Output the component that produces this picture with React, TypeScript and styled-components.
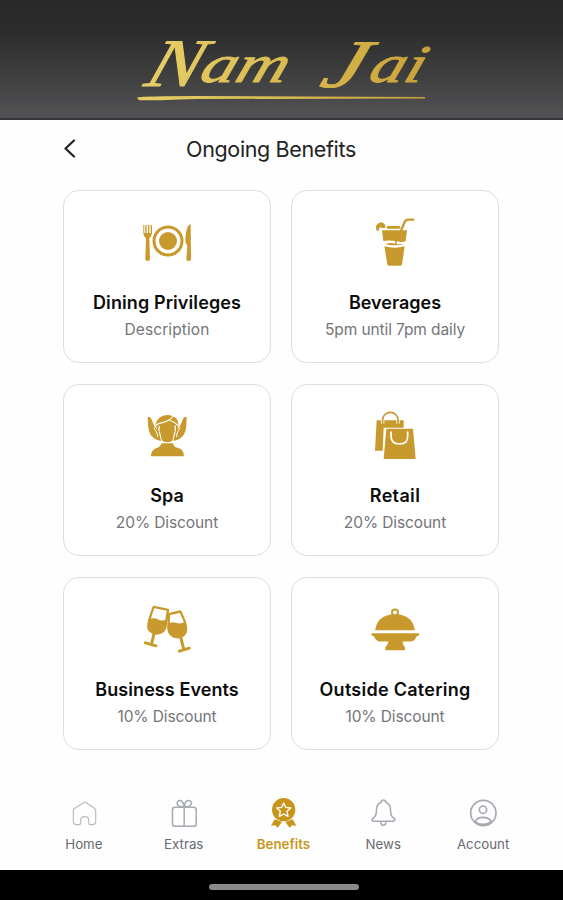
import React from 'react';
import styled, { createGlobalStyle } from 'styled-components';

const GOLD = '#c89a2e';

const GlobalStyle = createGlobalStyle`
  * { box-sizing: border-box; }
  body { margin: 0; background: #fff; font-family: Inter, "Liberation Sans", sans-serif; }
`;

const Screen = styled.div`
  display: flex;
  flex-direction: column;
  width: 563px;
  height: 900px;
  overflow: hidden;
  background: #fefefe;
`;

const Banner = styled.header`
  height: 120px;
  flex: none;
  background: linear-gradient(#282828 0%, #2c2c2c 25%, #3d3d3e 60%, #515153 97%);
  border-bottom: 2px solid #38383a;
`;

const Wordmark = styled.svg`
  display: block;
  width: 563px;
  height: 118px;
`;

const TitleBar = styled.div`
  display: grid;
  grid-template-columns: 36px 1fr 36px;
  align-items: center;
  height: 58px;
  flex: none;
  padding: 0 73px 0 52px;
`;

const BackButton = styled.button`
  display: flex;
  align-items: center;
  justify-content: center;
  width: 36px;
  height: 36px;
  padding: 0;
  border: 0;
  background: none;
`;

const PageTitle = styled.h1`
  margin: 0;
  color: #222;
  font-size: 21.5px;
  font-weight: 400;
  line-height: 28px;
  text-align: center;
  white-space: nowrap;
  letter-spacing: -0.36px;
`;

const BenefitGrid = styled.main`
  display: grid;
  grid-template-columns: 208px 208px;
  grid-auto-rows: 172.5px;
  gap: 21.2px 20px;
  padding: 12px 0 0 63px;
  flex: 1;
`;

const Card = styled.section`
  display: flex;
  flex-direction: column;
  align-items: center;
  padding-top: 19px;
  border: 1px solid #dedee0;
  border-radius: 16px;
  background: #fff;
`;

const CardIcon = styled.svg`
  width: 60px;
  height: 60px;
  flex: none;
`;

const CardTitle = styled.h2<{ $tracking: number }>`
  margin: 19.500px 0 0;
  color: #0c0c0c;
  font-size: 18px;
  font-weight: 600;
  line-height: 26px;
  white-space: nowrap;
  letter-spacing: ${(p) => p.$tracking}px;
`;

const CardNote = styled.p<{ $tracking: number }>`
  margin: 2px 0 0;
  color: #747479;
  font-size: 15.5px;
  line-height: 24px;
  white-space: nowrap;
  letter-spacing: ${(p) => p.$tracking}px;
`;

const TabBar = styled.nav`
  display: grid;
  grid-template-columns: repeat(5, 99.8px);
  height: 72px;
  flex: none;
  padding-left: 34px;
`;

const Tab = styled.a<{ $active?: boolean }>`
  display: flex;
  flex-direction: column;
  align-items: center;
  color: ${(p) => (p.$active ? '#c8951c' : '#696a6f')};
  font-size: 13.3px;
  font-weight: ${(p) => (p.$active ? 600 : 400)};
  line-height: 20px;
`;

const TabIcon = styled.svg`
  width: 30px;
  height: 30px;
  margin-bottom: 6px;
`;

const SystemBar = styled.footer`
  display: flex;
  justify-content: center;
  height: 30px;
  flex: none;
  padding: 14px 0 0 5px;
  background: #000;
`;

const HomeHandle = styled.div`
  width: 150px;
  height: 6px;
  border-radius: 3px;
  background: #89898b;
`;

const line = {
  fill: 'none',
  stroke: '#a6a9b1',
  strokeWidth: 4.5,
  strokeLinecap: 'round' as const,
  strokeLinejoin: 'round' as const,
};

const PlateArt = (
  <>
    <circle cx="324" cy="168" r="42" fill="none" stroke={GOLD} strokeWidth="9" />
    <circle cx="324" cy="168" r="27" fill={GOLD} />
    <path d="M250 120v24q1 12 8 16l-2 62q0 6 7 6t7-6l-2-62q7-4 8-16v-24h-4v24h-4v-24h-4v24h-4v-24h-4v24h-3v-24Z" fill={GOLD} />
    <path d="M392 116q-15 8-16 48 0 13 6 18l-3 40q0 6 7 6t7-6Z" fill={GOLD} />
  </>
);

const DrinkArt = (
  <>
    <path d="M276 136q-6-11 3-19 10-8 18 0 3 4 3 10l-9 1q-4-6-9 0-1 5-3 9Z" fill={GOLD} stroke={GOLD} strokeWidth="3" strokeLinejoin="round" />
    <path d="M309 127h33" stroke={GOLD} strokeWidth="8" strokeLinecap="round" />
    <path d="M348 137l11-26q3-7 10-7h16" fill="none" stroke={GOLD} strokeWidth="7" strokeLinecap="round" />
    <path d="M291 136h75l-4 33q-14 4-26 0-22-4-41-1Z" fill={GOLD} />
    <path d="M302 177q14-5 29-1 14 3 27 0-6 5-28 5t-28-4Z" fill={GOLD} />
    <path d="M334 167l-3 12" stroke={GOLD} strokeWidth="5" />
    <path d="M298 184q31 8 61 0l-8 54q-1 4-5 4h-34q-4 0-5-4Z" fill={GOLD} />
  </>
);

const SpaArt = (
  <>
    <path d="M287 133q3-20 23-26 18-5 33 3 12 7 12 24l-5 27q-6 24-28 26-22-1-28-25Z" fill={GOLD} />
    <path d="M285 138q8-8 25-11 20-5 30-19M325 120q18 4 29 17M298 138q-4 15 3 31M345 136q4 16-3 33" fill="none" stroke="#fff" strokeWidth="3.5" />
    <path d="M263 112q6-3 10 3l11 25 15 17 5 26q-19-2-32-18-8-12-9-53Zm117 0q-6-3-10 3l-11 25-14 17-6 26q19-2 32-18 9-12 9-53Z" fill={GOLD} />
    <path d="M282 143q12 18 11 28M361 143q-13 18-11 28M298 156l7 28M345 156l-7 28" fill="none" stroke="#fff" strokeWidth="3" />
    <path d="M304 190h35l3 7q3 5 13 7 16 4 17 25H273q0-18 15-24 14-4 16-15Z" fill={GOLD} />
  </>
);

const BagsArt = (
  <>
    <path d="M275 121h81v22h-60l-3 69h-23Z" fill={GOLD} />
    <path d="M293 131v-13a23 22 0 0 1 46 0v13" fill="none" stroke="#fff" strokeWidth="10" />
    <path d="M293 131v-12a23 22 0 0 1 46 0v12" fill="none" stroke={GOLD} strokeWidth="5" strokeLinecap="round" />
    <path d="M304 146h80l8 91h-96Z" fill={GOLD} />
    <path d="M318 156v11q0 25 26 25t24-25v-11" fill="none" stroke="#fff" strokeWidth="5" strokeLinecap="round" />
  </>
);

const GlassesArt = (
  <>
    <path d="M281 97l43 9-8 53q-6 18-26 18-24-3-25-20 0-18 16-60Z" fill="none" stroke={GOLD} strokeWidth="7" strokeLinejoin="round" />
    <path d="M265 134q20-6 29 1 8 6 25 1-1 37-26 42-30-2-30-22 0-12 2-22Z" fill={GOLD} />
    <path d="M282 177l-7 31M256 205l32 9" stroke={GOLD} strokeWidth="9" strokeLinecap="round" />
    <path d="M327 119l34-8q19 37 17 56-5 22-28 21-22-3-25-26Z" fill="none" stroke={GOLD} strokeWidth="7" strokeLinejoin="round" />
    <path d="M324 148q12-8 24-3 14 5 28-4 8 18 4 32-8 18-27 18-29-4-29-43Z" fill={GOLD} />
    <path d="M362 188l9 35M358 230l30-9" stroke={GOLD} strokeWidth="9" strokeLinecap="round" />
  </>
);

const ClocheArt = (
  <>
    <circle cx="330" cy="114" r="9" fill="none" stroke={GOLD} strokeWidth="6" />
    <path d="M270 167q6-38 42-46 18-4 36 0 36 8 42 46Z" fill={GOLD} />
    <path d="M261 176h138q4 0 4 4t-4 4q-5 1-7 7-4 9-16 10h-23q1 12 5 14 3 3 2 12H301q-1-9 2-12 6-3 7-14h-25q-11-1-15-10-2-6-7-7-4 0-4-4t2-4Z" fill={GOLD} />
  </>
);

const HomeArt = (
  <path {...line} strokeWidth={3.5} stroke="#b8babf" d="M70 78q0-5 4-8l27-17q4-2 8 0l24 17q4 3 4 8v31q0 10-9 10h-7q-5 0-5-6v-8q0-10-12-10t-12 10v8q0 6-6 6h-7q-9 0-9-10Z" />
);

const GiftArt = (
  <>
    <rect {...line} x="366" y="67" width="71" height="57" rx="7" />
    <path {...line} d="M401 68v55M400 67q-22-3-20-14 5-12 16-3 5 6 4 17Zm2 0q22-3 21-14-5-12-17-3-5 6-4 17Z" />
  </>
);

const BadgeArt = (
  <>
    <circle cx="704" cy="74" r="35" fill="#c8951c" />
    <path d="M677 103l-11 19 13-1 7 7 13-17Zm54 0l11 19-13-1-7 7-13-17Z" fill="#c8951c" />
    <path d="M704 54l6 13 15 2-11 10 3 15-13-7-13 7 3-15-11-10 15-2Z" fill="none" stroke="#fff" strokeWidth="4" strokeLinejoin="round" />
  </>
);

const BellArt = (
  <>
    <path {...line} d="M158 106q-2-4 5-8 8-4 8-25 1-17 15-22 0-6 6-6t6 6q14 5 15 22 0 21 8 25 7 4 5 8-2 3-5 3h-58q-4 0-5-3Z" />
    <path {...line} d="M184 112q1 9 8 9t7-9" />
  </>
);

const AccountArt = (
  <>
    <circle {...line} cx="490" cy="84" r="38" strokeWidth={5} />
    <circle {...line} cx="489" cy="74" r="11" strokeWidth={5} />
    <path {...line} strokeWidth={5} d="M465 109q7-12 24-12t25 12q-10 9-25 9t-24-9Z" />
  </>
);

interface Benefit {
  title: string;
  titleTracking: number;
  note: string;
  noteTracking: number;
  viewBox: string;
  art: React.ReactNode;
}

const benefits: Benefit[] = [
  { title: 'Dining Privileges', titleTracking: 0.1, note: 'Description', noteTracking: 0.1, viewBox: '231 75 180 180', art: PlateArt },
  { title: 'Beverages', titleTracking: 0, note: '5pm until 7pm daily', noteTracking: -0.1, viewBox: '240 75 180 180', art: DrinkArt },
  { title: 'Spa', titleTracking: 0, note: '20% Discount', noteTracking: -0.1, viewBox: '231 72 180 180', art: SpaArt },
  { title: 'Retail', titleTracking: 0.35, note: '20% Discount', noteTracking: -0.1, viewBox: '240 72 180 180', art: BagsArt },
  { title: 'Business Events', titleTracking: 0.08, note: '10% Discount', noteTracking: -0.1, viewBox: '231 67.5 180 180', art: GlassesArt },
  { title: 'Outside Catering', titleTracking: 0.26, note: '10% Discount', noteTracking: -0.1, viewBox: '240 67.5 180 180', art: ClocheArt },
];

const tabs = [
  { label: 'Home', viewBox: '57 39 90 90', art: HomeArt },
  { label: 'Extras', viewBox: '355.5 39 90 90', art: GiftArt },
  { label: 'Benefits', viewBox: '657 39 90 90', art: BadgeArt, active: true },
  { label: 'News', viewBox: '145.5 39 90 90', art: BellArt },
  { label: 'Account', viewBox: '444 39 90 90', art: AccountArt },
];

export default function App() {
  return (
    <Screen>
      <GlobalStyle />
      <Banner>
        <Wordmark viewBox="0 0 563 118" role="img" aria-label="Nam Jai">
          <defs>
            <linearGradient id="gold" gradientUnits="userSpaceOnUse" x1="138" y1="0" x2="428" y2="0">
              <stop offset="0" stopColor="#e6ce68" />
              <stop offset="0.5" stopColor="#d9bb50" />
              <stop offset="1" stopColor="#c9a239" />
            </linearGradient>
          </defs>
          <g
            fill="url(#gold)"
            stroke="url(#gold)"
            strokeWidth="0.9"
            strokeLinejoin="round"
            fontFamily="'Liberation Serif', serif"
            fontStyle="italic"
            transform="translate(28 0) skewX(-19)"
          >
            <text x="144" y="86" fontSize="68" textLength="54" lengthAdjust="spacingAndGlyphs">N</text>
            <text x="198" y="82" fontSize="53" textLength="86" lengthAdjust="spacingAndGlyphs">am</text>
            <text x="320" y="87" fontSize="68" textLength="42" lengthAdjust="spacingAndGlyphs">J</text>
            <text x="367" y="82" fontSize="53" textLength="54" lengthAdjust="spacingAndGlyphs">ai</text>
          </g>
          <path d="M137 97.5q8-1.500 60-1.500l228 1v1.500l-228 .5q-54 2-58 1Z" fill="url(#gold)" />
        </Wordmark>
      </Banner>
      <TitleBar>
        <BackButton aria-label="Back">
          <svg width="14" height="20" viewBox="0 0 14 20" fill="none" stroke="#222" strokeWidth="2.2" strokeLinecap="round" strokeLinejoin="round">
            <path d="M11 1.500L2.500 9.500l8.500 8" />
          </svg>
        </BackButton>
        <PageTitle>Ongoing Benefits</PageTitle>
      </TitleBar>
      <BenefitGrid>
        {benefits.map((b) => (
          <Card key={b.title}>
            <CardIcon viewBox={b.viewBox}>{b.art}</CardIcon>
            <CardTitle $tracking={b.titleTracking}>{b.title}</CardTitle>
            <CardNote $tracking={b.noteTracking}>{b.note}</CardNote>
          </Card>
        ))}
      </BenefitGrid>
      <TabBar>
        {tabs.map((t) => (
          <Tab key={t.label} $active={t.active}>
            <TabIcon viewBox={t.viewBox}>{t.art}</TabIcon>
            {t.label}
          </Tab>
        ))}
      </TabBar>
      <SystemBar>
        <HomeHandle />
      </SystemBar>
    </Screen>
  );
}
